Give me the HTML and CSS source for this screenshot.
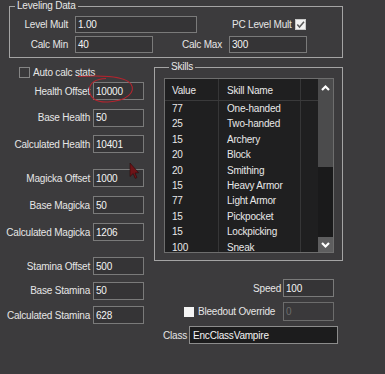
FILE: index.html
```html
<!DOCTYPE html>
<html>
<head>
<meta charset="utf-8">
<title>Leveling Data</title>
<link rel="stylesheet" href="styles.css">
</head>
<body>
<div class="window">
  <fieldset class="group leveling">
    <legend>Leveling Data</legend>
    <div class="lev-row">
      <span class="lbl lbl-lev">Level Mult</span>
      <div class="field field-top field-wide">1.00</div>
      <span class="pc">
        <span>PC Level Mult</span>
        <span class="check check-on"><svg width="9" height="9" viewBox="0 0 9 9"><polyline points="1.3,4.6 3.5,7 8,1.8" fill="none" stroke="#5a5a5a" stroke-width="1.5"/></svg></span>
      </span>
    </div>
    <div class="lev-row">
      <span class="lbl lbl-lev">Calc Min</span>
      <div class="field field-top field-mid">40</div>
      <span class="lbl lbl-calcmax">Calc Max</span>
      <div class="field field-top field-mid">300</div>
    </div>
  </fieldset>

  <div class="main">
    <div class="left">
      <div class="auto-row"><span class="check check-dark"></span><span>Auto calc stats</span></div>
      <div class="stat-group g1">
        <div class="stat"><span class="lbl">Health Offset</span><div class="field">10000</div></div>
        <div class="stat"><span class="lbl">Base Health</span><div class="field">50</div></div>
        <div class="stat"><span class="lbl">Calculated Health</span><div class="field">10401</div></div>
      </div>
      <div class="stat-group g2">
        <div class="stat"><span class="lbl">Magicka Offset</span><div class="field">1000</div></div>
        <div class="stat"><span class="lbl">Base Magicka</span><div class="field">50</div></div>
        <div class="stat"><span class="lbl">Calculated Magicka</span><div class="field">1206</div></div>
      </div>
      <div class="stat-group g3">
        <div class="stat"><span class="lbl">Stamina Offset</span><div class="field">500</div></div>
        <div class="stat"><span class="lbl">Base Stamina</span><div class="field">50</div></div>
        <div class="stat"><span class="lbl">Calculated Stamina</span><div class="field">628</div></div>
      </div>
    </div>

    <div class="right">
      <fieldset class="group skills">
        <legend>Skills</legend>
        <div class="list">
          <div class="list-main">
            <div class="lrow lhead"><span class="c1">Value</span><span class="c2">Skill Name</span><span class="c3"></span></div>
            <div class="lrow"><span class="c1">77</span><span class="c2">One-handed</span><span class="c3"></span></div>
            <div class="lrow"><span class="c1">25</span><span class="c2">Two-handed</span><span class="c3"></span></div>
            <div class="lrow"><span class="c1">15</span><span class="c2">Archery</span><span class="c3"></span></div>
            <div class="lrow"><span class="c1">20</span><span class="c2">Block</span><span class="c3"></span></div>
            <div class="lrow"><span class="c1">20</span><span class="c2">Smithing</span><span class="c3"></span></div>
            <div class="lrow"><span class="c1">15</span><span class="c2">Heavy Armor</span><span class="c3"></span></div>
            <div class="lrow"><span class="c1">77</span><span class="c2">Light Armor</span><span class="c3"></span></div>
            <div class="lrow"><span class="c1">15</span><span class="c2">Pickpocket</span><span class="c3"></span></div>
            <div class="lrow"><span class="c1">15</span><span class="c2">Lockpicking</span><span class="c3"></span></div>
            <div class="lrow"><span class="c1">100</span><span class="c2">Sneak</span><span class="c3"></span></div>
          </div>
          <div class="scrollbar">
            <div class="sb-up"><svg width="15" height="16" viewBox="0 0 15 16"><polyline points="4,11 7.5,7.5 11,11" fill="none" stroke="#ffffff" stroke-width="2.2"/></svg></div>
            <div class="sb-thumb"></div>
            <div class="sb-track"></div>
            <div class="sb-down"><svg width="15" height="15" viewBox="0 0 15 15"><polyline points="4,6 7.5,9.5 11,6" fill="none" stroke="#ffffff" stroke-width="2.2"/></svg></div>
          </div>
        </div>
      </fieldset>

      <div class="speed-row"><span class="lbl">Speed</span><div class="field">100</div></div>
      <div class="bleed-row">
        <span class="check check-white"></span>
        <span class="bleed-lbl">Bleedout Override</span>
        <div class="field field-disabled">0</div>
      </div>
      <div class="class-row"><span class="lbl">Class</span><div class="combo">EncClassVampire</div></div>
    </div>
  </div>

  <svg class="annot" width="385" height="374" viewBox="0 0 385 374">
    <path d="M78 76.5 C98 75.5 124 75 131 84 C136 92 127 101 108 102 C95 102.5 89 97 89.5 89 C90 82 97 79 106 78.5" fill="none" stroke="#b3242e" stroke-width="1.1"/>
    <polygon points="130,163 130,176.5 133.2,173.6 135.2,178.4 137,177.6 135,173 138.6,172.8" fill="#6e1418" stroke="#2c0a0b" stroke-width="0.6"/>
  </svg>
</div>
</body>
</html>
```

FILE: styles.css
```css
html, body {
  margin: 0;
  padding: 0;
  background: #3c3b3d;
}

body {
  width: 385px;
  height: 374px;
  overflow: hidden;
  font-family: "Liberation Sans", Arial, sans-serif;
  font-size: 10px;
  letter-spacing: -0.2px;
  color: #e6e6e6;
}

.window {
  position: relative;
  width: 385px;
  height: 374px;
}

.group {
  margin: 0;
  min-width: 0;
  box-sizing: border-box;
  border: 1px solid #a4a4a4;
}

.group legend {
  margin-left: 5px;
  padding: 0 2px;
  height: 12px;
  line-height: 12px;
  color: #e8e8e8;
}

.leveling {
  width: 334px;
  margin-left: 9px;
  padding: 4px 0 4px 0;
}

.lev-row {
  display: flex;
  align-items: center;
  gap: 7px;
  height: 17px;
}

.lev-row + .lev-row {
  margin-top: 3px;
}

.lbl {
  white-space: nowrap;
}

.lbl-lev {
  width: 58px;
  text-align: right;
}

.lbl-calcmax {
  width: 62px;
  text-align: right;
}

.pc {
  display: flex;
  align-items: center;
  gap: 3px;
  margin-left: 28px;
}

.field {
  box-sizing: border-box;
  display: flex;
  align-items: center;
  height: 18px;
  width: 51px;
  padding-left: 2px;
  border: 1px solid #7a7a7a;
  background: #353436;
  color: #f4f4f4;
  white-space: nowrap;
}

.field-top {
  height: 17px;
}

.field-wide {
  width: 122px;
}

.field-mid {
  width: 78px;
}

.field-disabled {
  height: 19px;
  margin-left: auto;
  color: #6c6c6c;
  background: #3a393b;
  border-color: #6c6c6c;
}

.check {
  box-sizing: border-box;
  display: inline-flex;
  align-items: center;
  justify-content: center;
  width: 11px;
  height: 11px;
  flex: none;
}

.check-on {
  background: #f2f2f2;
  border: 1px solid #c8c8c8;
}

.check-dark {
  background: #3a393b;
  border: 1px solid #858585;
}

.check-white {
  width: 10px;
  height: 10px;
  background: #f4f4f4;
}

.main {
  display: flex;
  margin-top: 3px;
}

.left {
  width: 154px;
  flex: none;
}

.auto-row {
  display: flex;
  align-items: center;
  gap: 3px;
  height: 11px;
  margin: 6px 0 0 19px;
}

.stat-group {
  display: flex;
  flex-direction: column;
}

.g1 {
  margin-top: 4px;
  gap: 8.5px;
}

.g2 {
  margin-top: 16px;
  gap: 9px;
}

.g3 {
  margin-top: 16px;
  gap: 6.5px;
}

.stat {
  display: flex;
  align-items: center;
  gap: 3px;
  height: 18px;
}

.stat .lbl {
  width: 90px;
  text-align: right;
}

.right {
  width: 189px;
  flex: none;
}

.skills {
  width: 189px;
  padding: 5px 8px 7px 9px;
}

.list {
  display: flex;
  box-sizing: border-box;
  width: 170px;
  height: 175px;
  border: 1px solid #6e6e6e;
  background: #1f1f20;
}

.list-main {
  flex: 1;
  overflow: hidden;
}

.lrow {
  display: grid;
  grid-template-columns: 54px 82px 17px;
  height: 15.4px;
  line-height: 15.4px;
  color: #e8e8e8;
}

.lrow span {
  box-sizing: border-box;
  white-space: nowrap;
  overflow: hidden;
}

.lrow .c1,
.lrow .c2 {
  border-right: 1px solid #363637;
}

.lrow .c1 {
  padding-left: 7px;
}

.lrow .c2 {
  padding-left: 8px;
}

.lhead {
  box-sizing: border-box;
  height: 22px;
  line-height: 19px;
  border-bottom: 1px solid #3a3a3b;
}

.lhead span {
  padding-top: 2px;
}

.scrollbar {
  width: 15px;
  flex: none;
  display: flex;
  flex-direction: column;
  background: #1a1a1b;
}

.sb-up {
  height: 16px;
  background: #4b4b4c;
}

.sb-up svg,
.sb-down svg {
  display: block;
}

.sb-thumb {
  height: 72px;
  background: #4b4b4c;
}

.sb-track {
  flex: 1;
}

.sb-down {
  height: 15px;
  background: #5e5e5f;
}

.speed-row {
  display: flex;
  justify-content: flex-end;
  align-items: center;
  gap: 2px;
  height: 18px;
  margin-top: 18px;
  padding-right: 9px;
}

.bleed-row {
  display: flex;
  align-items: center;
  height: 19px;
  margin-top: 5px;
  padding: 0 9px 0 30px;
}

.bleed-lbl {
  margin-left: 4px;
  white-space: nowrap;
}

.class-row {
  display: flex;
  align-items: center;
  gap: 2px;
  height: 18px;
  margin-top: 5px;
  padding-left: 9px;
}

.combo {
  box-sizing: border-box;
  display: flex;
  align-items: center;
  width: 149px;
  height: 18px;
  padding-left: 3px;
  background: #1c1c1d;
  border: 1px solid #8c8c8c;
  color: #f4f4f4;
}

.annot {
  position: absolute;
  left: 0;
  top: 0;
  pointer-events: none;
}
```
